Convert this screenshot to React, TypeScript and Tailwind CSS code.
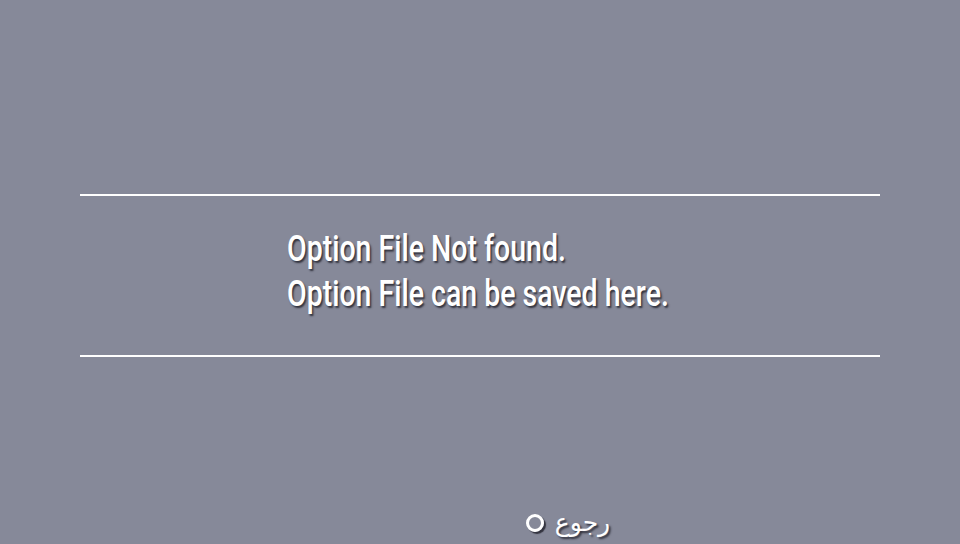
export default function App() {
  const shadow = { textShadow: "2px 2px 2px rgba(30,30,40,0.8)" } as const;
  return (
    <div className="w-[960px] h-[544px] bg-[#868999] flex flex-col overflow-hidden">
      <div className="h-[194px]" />
      <div className="mx-[80px] h-[2px] bg-white" />
      <div className="h-[159px] pl-[287px] pt-[30px]">
        <div
          className="origin-left scale-x-[0.77] text-white text-[37px] font-medium leading-[45px] whitespace-nowrap"
          style={{ fontFamily: "Roboto, 'Liberation Sans', sans-serif", ...shadow }}
        >
          <div>Option File Not found.</div>
          <div>Option File can be saved here.</div>
        </div>
      </div>
      <div className="mx-[80px] h-[2px] bg-white" />
      <div className="flex-1 flex items-end justify-center pb-[4px]">
        <div className="flex items-center gap-[11px] pl-[176px]">
          <div className="w-[18px] h-[18px] rounded-full border-[3px] border-white shadow-[2px_2px_1px_rgba(30,30,40,0.8)]" />
          <span
            className="text-white text-[25px] leading-[34px]"
            style={{ fontFamily: "'DejaVu Sans', 'Noto Sans', sans-serif", ...shadow }}
          >
            رجوع
          </span>
        </div>
      </div>
    </div>
  );
}
